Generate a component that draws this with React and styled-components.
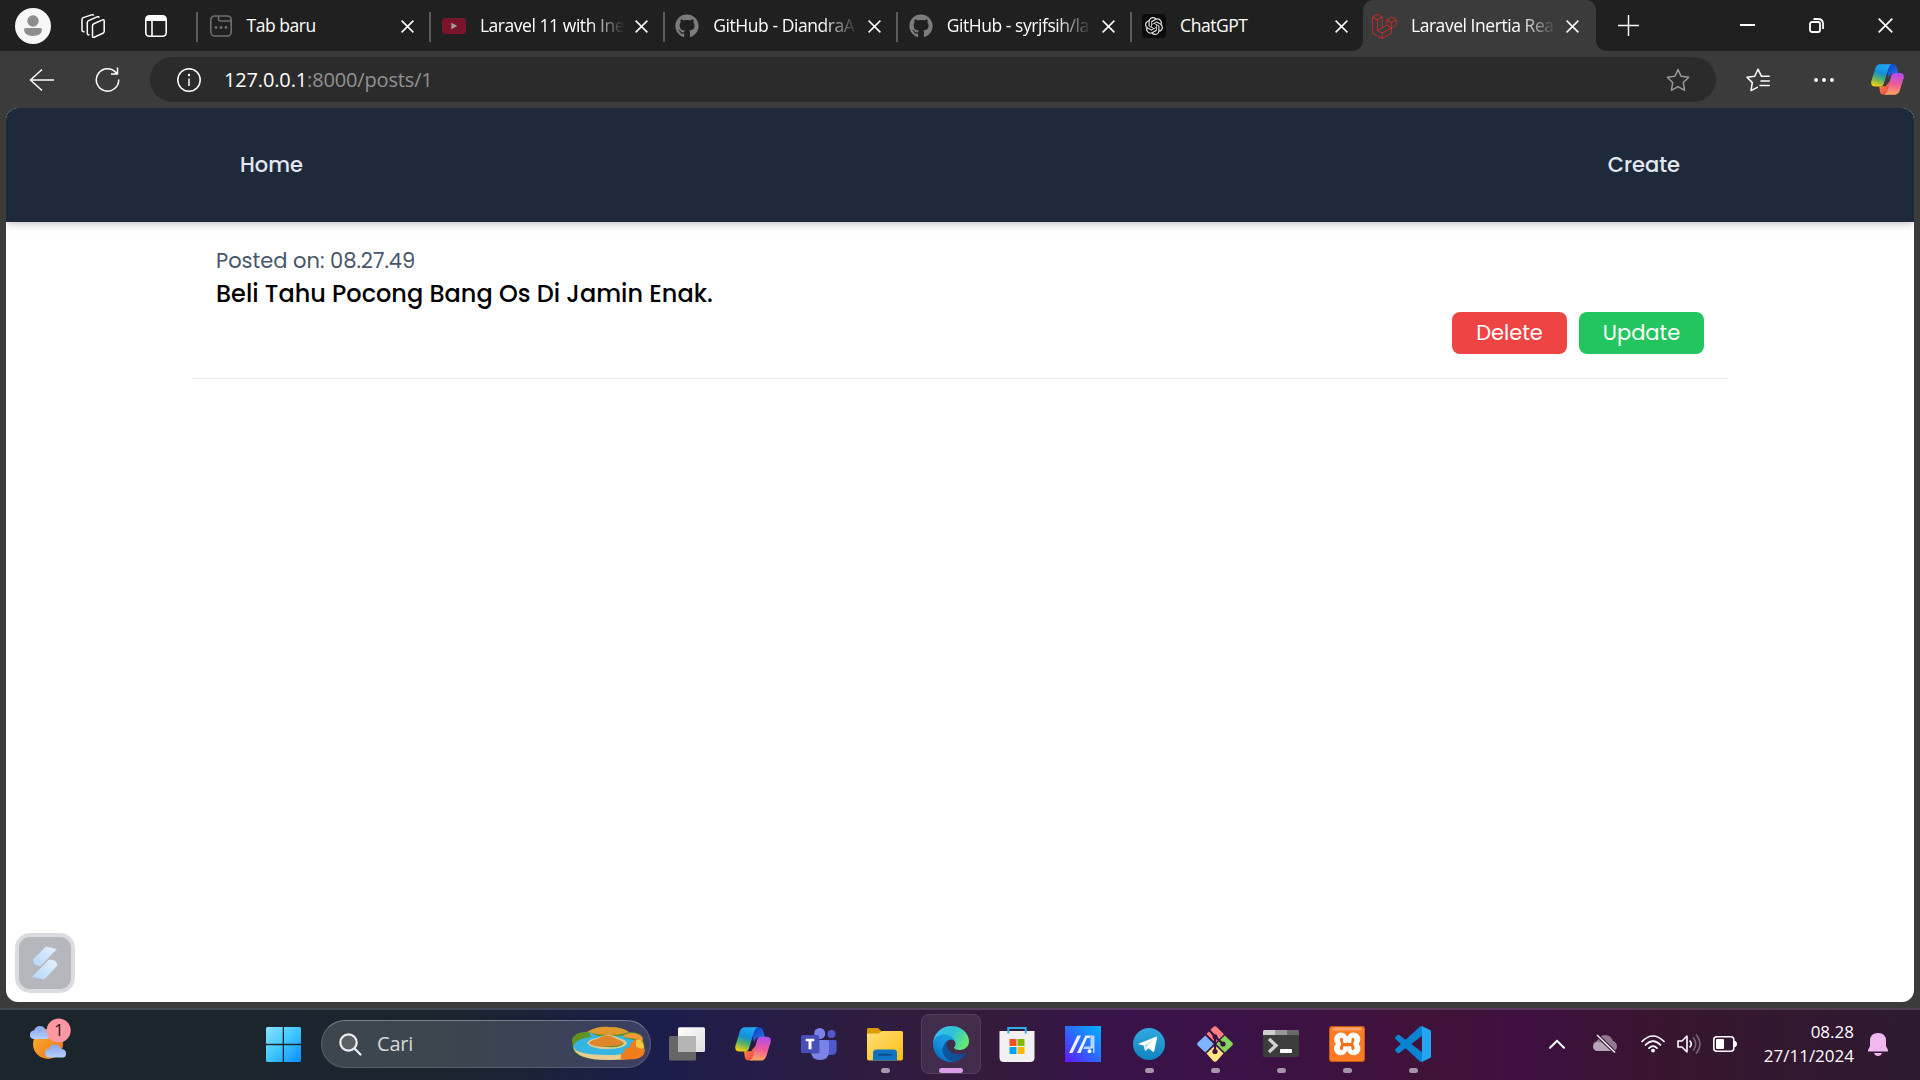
import React from "react";
import styled, { createGlobalStyle } from "styled-components";
import { FaGithub, FaLaravel } from "react-icons/fa";
import { SiOpenai } from "react-icons/si";

const Global = createGlobalStyle`
  *, *::before, *::after { box-sizing: border-box; }
  html, body { margin: 0; padding: 0; background: #3b3b3b; overflow: hidden; }
  svg { display: block; flex: none; }
`;

const ui = `"Segoe UI", "Open Sans", "Noto Sans", sans-serif`;
const web = `"Poppins", "Inter", sans-serif`;

const Screen = styled.div`
  width: 1920px;
  height: 1080px;
  display: flex;
  flex-direction: column;
  font-family: ${ui};
  color: #fff;
  background: #3b3b3b;
`;

/* ---------- title bar ---------- */
const TitleBar = styled.div`
  height: 51px;
  flex: none;
  display: flex;
  background: #202020;
`;
const TitleTools = styled.div`
  width: 196px;
  flex: none;
  display: flex;
  align-items: center;
  padding-left: 15px;
`;
const Avatar = styled.div`
  width: 36px;
  height: 36px;
  margin: 1px 30px 0 0;
`;
const ToolIcon = styled.div`
  margin-right: ${(p) => p.$gap || 0}px;
`;
const TabItem = styled.div`
  width: ${(p) => p.$w}px;
  height: 51px;
  flex: none;
  display: flex;
  align-items: center;
  position: relative;
  padding: 1px ${(p) => (p.$active ? 17 : 15)}px 0 ${(p) => (p.$active ? 10 : 12.5)}px;
  background: ${(p) => (p.$active ? "#3b3b3b" : "transparent")};
  border-radius: ${(p) => (p.$active ? "10px 10px 0 0" : "0")};
  &::before, &::after {
    content: "";
    display: ${(p) => (p.$active ? "block" : "none")};
    position: absolute;
    bottom: 0;
    width: 10px;
    height: 10px;
  }
  &::before { left: -10px; background: radial-gradient(circle at 0 0, transparent 9.5px, #3b3b3b 10px); }
  &::after { right: -10px; background: radial-gradient(circle at 100% 0, transparent 9.5px, #3b3b3b 10px); }
`;
const Divider = styled.div`
  width: 2px;
  height: 30px;
  margin: 12px -2px 0 0;
  background: #5c5c5c;
  flex: none;
`;
const TabIcon = styled.div`
  width: 24px;
  height: 24px;
  margin-right: 14px;
  display: flex;
  align-items: center;
  justify-content: center;
  flex: none;
`;
const TabTitle = styled.div`
  flex: 1;
  min-width: 0;
  white-space: nowrap;
  font-size: 17.5px;
  line-height: 26px;
  margin: 0 10px 2px 0;
  letter-spacing: -0.45px;
  mask-image: ${(p) => (p.$fade ? "linear-gradient(90deg,#000 calc(100% - 36px),transparent)" : "none")};
`;
const NewTab = styled.div`
  padding: 15px 0 0 22px;
  flex: 1;
`;
const WindowButtons = styled.div`
  width: 184px;
  display: flex;
  justify-content: space-between;
  padding: 18px 27px 0 4px;
  flex: none;
`;

/* ---------- toolbar ---------- */
const Toolbar = styled.div`
  height: 57px;
  flex: none;
  display: flex;
  align-items: center;
  padding: 0 15px 0 29px;
`;
const Address = styled.div`
  width: 1566px;
  height: 45px;
  margin: 0 30px 0 30px;
  padding: 0 26px 0 27px;
  display: flex;
  align-items: center;
  border-radius: 23px;
  background: #2b2b2b;
  flex: none;
`;
const Url = styled.div`
  flex: 1;
  margin-left: 23px;
  font-size: 20px;
  line-height: 28px;
  letter-spacing: -0.15px;
  color: #fff;
  span { color: #929292; }
`;

/* ---------- web page ---------- */
const Page = styled.div`
  flex: none;
  width: 1908px;
  height: 894px;
  margin: 0 6px;
  border-radius: 12px;
  overflow: hidden;
  background: #fff;
  font-family: ${web};
  display: flex;
  flex-direction: column;
`;
const Header = styled.header`
  height: 114px;
  flex: none;
  background: #1e293b;
  display: flex;
  justify-content: center;
  align-items: center;
  box-shadow: 0 5px 7.5px -1px rgba(0,0,0,.12), 0 2.5px 5px -2px rgba(0,0,0,.12);
`;
const Nav = styled.nav`
  width: 1536px;
  padding: 0 48px;
  display: flex;
  justify-content: space-between;
`;
const NavLink = styled.a`
  color: #e2e8f0;
  font-size: 21px;
  line-height: 30px;
  font-weight: 500;
`;
const Post = styled.article`
  width: 1536px;
  height: 157px;
  margin: 0 auto;
  padding: 23px 24px 0 24px;
  border-bottom: 1px solid #e5e7eb;
  display: flex;
  flex-direction: column;
`;
const Posted = styled.div`
  height: 30px;
  font-size: 21px;
  line-height: 32px;
  color: #475569;
  white-space: nowrap;
`;
const Title = styled.p`
  margin: 0;
  height: 37px;
  font-size: 24px;
  line-height: 38px;
  font-weight: 500;
  color: #000;
  white-space: nowrap;
`;
const Actions = styled.div`
  display: flex;
  justify-content: flex-end;
  gap: 12px;
`;
const Button = styled.button`
  width: ${(p) => p.$w}px;
  height: 42px;
  padding: 0;
  border: 0;
  border-radius: 8px;
  background: ${(p) => p.$bg};
  color: #fff;
  font: 400 21px/42px ${web};
`;
const DevBadge = styled.div`
  width: 60px;
  height: 60px;
  margin: auto 0 9px 9px;
  border: 4px solid #dbdce0;
  border-radius: 15px;
  background: #b6b7bd;
  display: flex;
  align-items: center;
  justify-content: center;
`;

/* ---------- taskbar ---------- */
const Taskbar = styled.div`
  height: 72px;
  margin-top: auto;
  flex: none;
  display: flex;
  align-items: flex-start;
  border-top: 2px solid rgba(255,255,255,.16);
  background: linear-gradient(90deg, #1b252b 0, #1a262e 440px, #18233a 540px, #1b1d4a 660px, #261c46 760px, #2f1c3e 880px, #351a3d 1000px, #38124a 1120px, #3b1245 1250px, #3f1239 1430px, #3e1040 1530px, #38152f 1660px, #2d1a30 1920px) border-box;
`;
const Weather = styled.div`
  width: 266px;
  padding: 8px 0 0 28px;
`;
const Start = styled.div`
  width: 55px;
  padding-top: 17px;
`;
const Search = styled.div`
  width: 330px;
  height: 48px;
  margin: 10px 6px 0 0;
  padding: 0 5px 0 17px;
  border: 1.5px solid rgba(255,255,255,.14);
  border-top-color: rgba(255,255,255,.3);
  border-radius: 24px;
  background: rgba(255,255,255,.15);
  display: flex;
  align-items: center;
`;
const SearchText = styled.div`
  flex: 1;
  margin-left: 15px;
  font-size: 20px;
  line-height: 28px;
  letter-spacing: -0.2px;
  color: #d6d9dc;
`;
const Apps = styled.div`
  display: flex;
  gap: 6px;
`;
const AppTile = styled.div`
  width: 60px;
  height: 60px;
  margin-top: 4px;
  border-radius: 8px;
  border: 1px solid ${(p) => (p.$active ? "rgba(255,255,255,.09)" : "transparent")};
  background: ${(p) => (p.$active ? "rgba(255,255,255,.08)" : "transparent")};
  display: flex;
  flex-direction: column;
  align-items: center;
  padding-top: 11px;
`;
const Running = styled.div`
  width: ${(p) => (p.$active ? 24 : 9)}px;
  height: 5px;
  margin-top: 6px;
  border-radius: 3px;
  background: ${(p) => (p.$active ? "#dc9ee8" : "#a596aa")};
`;
const Tray = styled.div`
  margin-left: auto;
  padding-right: 32px;
  height: 68px;
  display: flex;
  align-items: center;
`;
const TrayIcon = styled.div`
  margin-right: ${(p) => p.$gap}px;
`;
const Clock = styled.div`
  width: 96px;
  margin-right: 14px;
  text-align: right;
  font-size: 17px;
  line-height: 24px;
`;

/* ---------- icons ---------- */
const Close = ({ s = 13, w = 1.5 }) => (
  <svg width={s} height={s} viewBox="0 0 13 13" stroke="#fff" strokeWidth={w} fill="none">
    <path d="M.6.6 12.4 12.4M12.4.6.6 12.4" />
  </svg>
);
const NewTabIcon = () => (
  <svg width="24" height="24" viewBox="0 0 24 24" fill="none" stroke="#6f6f6f" strokeWidth="1.6">
    <rect x="1.8" y="2" width="20.4" height="20" rx="4" />
    <path d="M9.5 2v3.5q0 1.500 1.500 1.500h11" />
    <g fill="#6f6f6f" stroke="none"><circle cx="7" cy="13.5" r="1.4" /><circle cx="12" cy="13.5" r="1.4" /><circle cx="17" cy="13.5" r="1.4" /></g>
  </svg>
);
const YouTube = () => (
  <svg width="24" height="24" viewBox="0 0 24 24"><rect y="4" width="24" height="16" rx="3.5" fill="#7a1428" /><path d="M9.3 8.800v6.400l6-3.200z" fill="#a39a9c" /></svg>
);
const OpenAi = () => (
  <svg width="24" height="24" viewBox="0 0 24 24"><rect width="24" height="24" rx="4" fill="#0b0b0b" /><g transform="translate(3 3)"><SiOpenai size={18} color="#e2e2e2" /></g></svg>
);
const Star = ({ list, color }) => (
  <svg width="24" height="24" viewBox="0 0 24 24" fill="none" stroke={color} strokeWidth="1.5" strokeLinejoin="round" strokeLinecap="round">
    {list ? (
      <path d="M23.200 8.300H15.500L12 1.200 8.700 8.200 1 9.300l5.300 5.300L5 22.600l6.300-3.300M15 12.900h8.200M14 17.500h9.200" />
    ) : (
      <path d="m12 1.600 3.100 6.700 7.600 1-5.400 5.200 1.300 7.800-6.600-3.700-6.600 3.700 1.300-7.800-5.400-5.200 7.600-1z" />
    )}
  </svg>
);
const Copilot = ({ id, w = 36 }) => (
  <svg width={w} height={w} viewBox="0 0 36 36">
    <defs>
      <linearGradient id={id + "a"} x1=".6" y1="0" x2=".3" y2="1"><stop offset="0" stopColor="#1fa9f4" /><stop offset=".4" stopColor="#138fd8" /><stop offset=".65" stopColor="#4fae6d" /><stop offset="1" stopColor="#f2d010" /></linearGradient>
      <linearGradient id={id + "b"} x1=".5" y1="0" x2=".4" y2="1"><stop offset="0" stopColor="#b04df0" /><stop offset=".5" stopColor="#ec5a9b" /><stop offset="1" stopColor="#ffa65c" /></linearGradient>
      <linearGradient id={id + "c"} x1="0" y1="0" x2="1" y2="1"><stop offset="0" stopColor="#0a3dc0" /><stop offset="1" stopColor="#2a78e8" /></linearGradient>
      <linearGradient id={id + "d"} x1="0" y1="0" x2="1" y2="1"><stop offset="0" stopColor="#ff9a3c" /><stop offset="1" stopColor="#e8364a" /></linearGradient>
    </defs>
    <g transform="translate(0 1.3)">
      <path d="M16 0h7.500q3.500 0 4.500 3.500L30 10h-5q-4.500 0-6 5z" fill={`url(#${id}c)`} />
      <path d="M9 24h7l5-6-3.500 15h-5q-2 0-2.700-3z" fill={`url(#${id}d)`} />
      <path d="M10 0h12.500q-2.500 1-3.500 4.500L14 21q-1 3.200-4 3.200H4.500q-5.500 0-4-6L4.500 5Q6 0 10 0z" fill={`url(#${id}a)`} />
      <path d="M26 9.500h5.500q5.500 0 4 6L31.500 28.500Q30 33.300 26 33.300H14.500q2.500-1 3.500-4.500L22 13q1-3.500 4-3.500z" fill={`url(#${id}b)`} />
    </g>
  </svg>
);
const Edge = () => (
  <svg width="36" height="36" viewBox="0 0 256 256">
    <defs>
      <linearGradient id="ea" x1="0" y1=".5" x2="1" y2=".5"><stop offset="0" stopColor="#0c59a4" /><stop offset="1" stopColor="#114a8b" /></linearGradient>
      <linearGradient id="eb" x1=".8" y1=".2" x2=".2" y2="1"><stop offset="0" stopColor="#1b9de2" /><stop offset=".4" stopColor="#1595df" /><stop offset="1" stopColor="#0067bf" /></linearGradient>
      <linearGradient id="ec" x1="0" y1=".2" x2="1" y2=".6"><stop offset="0" stopColor="#35c1f1" /><stop offset=".5" stopColor="#2fc2d6" /><stop offset="1" stopColor="#66eb6e" /></linearGradient>
    </defs>
    <path fill="url(#ea)" d="M231 190.500c-3.400 1.800-6.900 3.400-10.500 4.700a101.500 101.500 0 0 1-35.900 6.500c-47.300 0-88.500-32.500-88.500-74.300 0-11.400 6.400-21.900 16.400-27.300-42.800 1.800-53.800 46.400-53.800 72.500 0 73.900 68.100 81.400 82.800 81.400 7.900 0 19.800-2.300 27-4.600l1.300-.4a128.300 128.300 0 0 0 66.600-52.800 4 4 0 0 0-5.400-5.700z" />
    <path fill="url(#eb)" d="M105.700 241.400a79.200 79.200 0 0 1-22.700-21.300 80.700 80.700 0 0 1 29.500-120c3.200-1.500 8.500-4.100 15.600-4a32.400 32.400 0 0 1 25.700 13 31.900 31.900 0 0 1 6.300 18.700c0-.2 24.500-79.600-80-79.600-43.900 0-80 41.600-80 78.200a130.200 130.200 0 0 0 12.100 56 128 128 0 0 0 156.400 67 75.500 75.500 0 0 1-62.800-8z" />
    <path fill="url(#ec)" d="M152.300 148.900c-.9 1-3.400 2.500-3.400 5.600 0 2.600 1.700 5.200 4.800 7.300 14.300 10 41.400 8.600 41.500 8.600 10.700 0 21.100-2.900 30.300-8.300a61.400 61.400 0 0 0 30.400-52.900c.3-22.400-8-37.300-11.300-43.900C223.500 23.900 177.700 0 128 0A128 128 0 0 0 0 126.200c.5-36.500 36.800-66 80-66 3.500 0 23.500.3 42 10.100 16.300 8.600 24.900 19 30.800 29.200 6.200 10.700 7.300 24.100 7.300 29.500s-2.700 13.300-7.800 19.900z" />
  </svg>
);
const TaskView = () => (
  <svg width="36" height="36" viewBox="0 0 36 36">
    <defs><linearGradient id="tv" x1="0" y1="0" x2="1" y2="1"><stop offset="0" stopColor="#fff" /><stop offset="1" stopColor="#dedede" /></linearGradient></defs>
    <rect x="0" y="10" width="27" height="24.500" rx="1.500" fill="#666" />
    <rect x="9" y="1.300" width="27" height="24.700" rx="1.500" fill="url(#tv)" />
    <path d="M9 10h18v16H10.500Q9 26 9 24.500z" fill="#b5b5b5" />
  </svg>
);
const Teams = () => (
  <svg width="36" height="36" viewBox="0 0 36 36">
    <circle cx="30.500" cy="8" r="4" fill="#5059c9" />
    <path d="M27 14h7q1.600 0 1.600 1.600V24q0 5-5 5H27z" fill="#5059c9" />
    <circle cx="18.700" cy="7.500" r="5.500" fill="#7b83eb" />
    <path d="M10 14h16q2 0 2 2v9q0 9-9 9t-9-9z" fill="#7b83eb" />
    <path d="M10 14h9v12q0 2-2 2h-6.600z" fill="#5a62c3" opacity=".7" />
    <rect x="0" y="9" width="18" height="18" rx="1.600" fill="#464eb8" />
    <path d="M4.800 12.700h8.400v2.600h-2.700v8H7.500v-8H4.800z" fill="#fff" />
  </svg>
);
const Explorer = () => (
  <svg width="36" height="36" viewBox="0 0 36 36">
    <defs><linearGradient id="fx" x1="0" y1="0" x2="1" y2="1"><stop offset="0" stopColor="#ffe07a" /><stop offset="1" stopColor="#fcbd12" /></linearGradient></defs>
    <path d="M1.500 2H11l4 3.500V12H0V3.500Q0 2 1.500 2z" fill="#dc9a05" />
    <path d="M0 7.500h11.500L15.500 5H34.500Q36 5 36 6.500v26q0 2-2 2H2q-2 0-2-2z" fill="url(#fx)" />
    <path d="M6 34.500V27q0-3.500 3.500-3.500h17Q30 23.500 30 27v7.500z" fill="#0f74c4" />
    <path d="M11 28.800h14" stroke="#0b4a85" strokeWidth="1.800" />
  </svg>
);
const Store = () => (
  <svg width="36" height="36" viewBox="0 0 36 36">
    <path d="M.5 5h35v26.500q0 4.500-4.500 4.500H5Q.5 36 .5 31.500z" fill="#f1f1f1" />
    <path d="M9.300 7.500V2h17.400v5.500" fill="none" stroke="#28b0ea" strokeWidth="2" />
    <path d="M10.500 13h7v7h-7z" fill="#f25022" /><path d="M18.500 13h7v7h-7z" fill="#7fba00" />
    <path d="M10.500 21h7v7h-7z" fill="#00a4ef" /><path d="M18.500 21h7v7h-7z" fill="#ffb900" />
  </svg>
);
const MyAsus = () => (
  <svg width="36" height="36" viewBox="0 0 36 36">
    <defs><linearGradient id="ma" x1="0" y1="1" x2="1" y2="0"><stop offset="0" stopColor="#6417ff" /><stop offset=".5" stopColor="#2b6bff" /><stop offset="1" stopColor="#00b3ff" /></linearGradient></defs>
    <path d="M0 0h36v36H0z" fill="url(#ma)" />
    <path d="M4 27 12.500 9.500H16L7.500 27zM12 27l8.500-17.500H26L24.500 12h-2.500L15.500 27z" fill="#eef3ff" />
    <path d="M25.500 9.500h4V27h-1.500v-4.500h-2.500zM19.500 20.500h6v2.500h-7.200z" fill="#b9d4ff" />
    <circle cx="24.500" cy="25.200" r="1.900" fill="#fff" />
  </svg>
);
const Telegram = () => (
  <svg width="36" height="36" viewBox="0 0 36 36">
    <defs><linearGradient id="tg" x1="0" y1="0" x2="0" y2="1"><stop offset="0" stopColor="#33a9e0" /><stop offset="1" stopColor="#0f83bf" /></linearGradient></defs>
    <circle cx="18" cy="18" r="16" fill="url(#tg)" />
    <path d="M7.500 17.800 25 10.700q1.300-.4 1 1.200L23.300 25q-.4 1.500-1.700.6l-4.300-3.300-2.400 2.300q-.8.700-1-.4l-1.300-4.700-5-1.300q-.9-.3-.1-.4z" fill="#fff" />
    <path d="m13.500 19.500 8.500-5.700-6.500 6.700-.8 3z" fill="#b9d9ec" />
  </svg>
);
const Git = () => (
  <svg width="36" height="36" viewBox="0 0 36 36">
    <path d="M9.500 8 16 1.300q2-2 4 0L27 8.300 18.500 16.800z" fill="#ff7f7f" />
    <path d="M8.300 9.500 16.800 18 8.300 26.500.8 19.500q-1.400-1.500 0-3z" fill="#80b3ff" />
    <path d="M27.700 9.500 35.200 16.500q1.400 1.500 0 3L27.700 26.500 19.200 18z" fill="#87d45e" />
    <path d="m18 19.200 8.500 8.300-6.500 7.200q-2 2-4 0l-6.500-7.200z" fill="#ffe680" />
    <path d="M12.500 4.500 18 10.500v15M18 10.500l8 7.500" stroke="#3a1245" strokeWidth="2.200" fill="none" />
    <circle cx="18" cy="10.800" r="2.500" fill="#3a1245" /><circle cx="18" cy="25.500" r="2.600" fill="#3a1245" /><circle cx="26" cy="18" r="2.600" fill="#3a1245" />
  </svg>
);
const Terminal = () => (
  <svg width="36" height="36" viewBox="0 0 36 36">
    <rect x="0" y="4" width="36" height="27" rx="1.500" fill="#3c3c3c" />
    <path d="M1.500 4H12v5H0V5.500Q0 4 1.500 4z" fill="#cfcfcf" /><path d="M12 4h12v5H12z" fill="#999" /><path d="M24 4h10.500Q36 4 36 5.500V9H24z" fill="#6a6a6a" />
    <path d="m6 13 7 6.500L6 26" fill="none" stroke="#d0d0d0" strokeWidth="3.400" />
    <rect x="17" y="23" width="12" height="4" rx=".8" fill="#fff" />
  </svg>
);
const Xampp = () => (
  <svg width="36" height="36" viewBox="0 0 36 36">
    <rect width="36" height="36" rx="3" fill="#c95c14" />
    <rect x="1" y="1" width="34" height="34" rx="2.500" fill="#fb7a24" />
    <path d="M5 1.500h26q3 0 1 3H4Q2 4.500 5 1.500z" fill="#fda469" />
    <g fill="#fff">
      <circle cx="12" cy="13.300" r="6.800" /><circle cx="24.500" cy="13.300" r="6.800" />
      <circle cx="11.800" cy="22.500" r="6.800" /><circle cx="24.700" cy="22.500" r="6.800" />
    </g>
    <path d="M11.500 12.300q1.800-1.200 2.500.7v2.800q.2 1.300 1.500 1.300h5.500q1.300 0 1.500-1.300V13q.7-1.900 2.300-.7 1.400 1.800 0 4-1.300 1.500 0 3.200 1.600 2.300 0 4.300-1.700 1-2.300-.8v-1.500q-.2-1.300-1.500-1.300h-5.500q-1.300 0-1.500 1.300V23q-.7 1.900-2.400.8-1.700-2 0-4.300 1.200-1.500 0-3.200-1.500-2.300-.1-4z" fill="#f0701c" />
    <path d="M18.200 3.500 16.500 8l1.700 2.200L20 8zM18.200 31.500 16.500 28l1.700-2.200L20 28z" fill="#fb7a24" />
  </svg>
);
const VsCode = () => (
  <svg width="36" height="36" viewBox="0 0 24 24">
    <path fill="#0a84d2" d="M23.150 2.587L18.210.210a1.494 1.494 0 0 0-1.705.290l-9.460 8.630-4.120-3.128a.999.999 0 0 0-1.276.057L.327 7.261A1 1 0 0 0 .326 8.740L3.899 12 .326 15.260a1 1 0 0 0 .001 1.479L1.650 17.940a.999.999 0 0 0 1.276.057l4.120-3.128 9.460 8.630a1.492 1.492 0 0 0 1.704.290l4.942-2.377A1.500 1.500 0 0 0 24 20.060V3.939a1.500 1.500 0 0 0-.850-1.352zm-5.146 14.861L10.826 12l7.178-5.448v10.896z" />
    <path fill="#27a5f3" d="M18 .15 23.150 2.587Q24 3 24 3.939V20.060q0 .9-.85 1.352L18 23.850z" />
  </svg>
);
const WeatherIcon = () => (
  <svg width="44" height="45" viewBox="0 -5 44 45">
    <defs>
      <linearGradient id="sun" x1="0" y1="0" x2="1" y2="1"><stop offset="0" stopColor="#fbb436" /><stop offset="1" stopColor="#ee6f12" /></linearGradient>
      <linearGradient id="cloud" x1="0" y1="0" x2="0" y2="1"><stop offset="0" stopColor="#86a6ee" /><stop offset="1" stopColor="#b5cffb" /></linearGradient>
    </defs>
    <circle cx="20" cy="21" r="15" fill="url(#sun)" />
    <path d="M6 16q-4 0-4-4 0-4.500 4-4.500 1.500-4.500 6-4.500t6 5q4 0 4 4t-4 4z" fill="url(#cloud)" />
    <path d="M21 34.500q-4 0-4-4.500t4-4q1.500-4.500 6-4.500t6 4.500q5 0 5 4.500t-4 4z" fill="url(#cloud)" />
    <circle cx="30.700" cy="7.500" r="12" fill="#ff97a3" />
    <text x="30.900" y="13.300" textAnchor="middle" fontSize="16.500" fill="#1c1014">1</text>
  </svg>
);
const IslandArt = () => (
  <svg width="74" height="36" viewBox="0 0 74 36">
    <path d="M1 13Q5 5 16 6 26 0 38 1q14 0 20 5 14 0 14 8l2 10q-2 10-36 10T2 22z" fill="#5f9420" />
    <path d="M16 6Q26 0 38 1q12 0 20 5-18 6-42 0z" fill="#e2982f" />
    <path d="M2 20q4-8 18-9l-2-5 9 4h24l8-3-6 5q17 2 19 9 0 9-34 9T2 20z" fill="#35b5e2" />
    <path d="M2 20q2 9 34 9 30 0 36-8 0 13-34 13T2 20z" fill="#e9cd92" />
    <path d="M16 17q2-4 10-5 12-6 22 0 8 2 8 6-4 5-20 5t-20-6z" fill="#d9cf9a" />
    <path d="M18 17q2-3 8-4 10-7 20 0 6 2 7 4-4 4-18 4t-17-4z" fill="#e0862a" />
    <path d="M30 20q16 1 23-3-2 5-18 4z" fill="#6d8c1a" />
    <path d="M52 11q2-4 10-4 10 1 10 8-8-3-20-4z" fill="#f09a3a" />
    <path d="M50 34q-1-7 3-8 1-6 6-4 0-6 4-7 2-5 5-2 5 3 5 9 3 8-8 11z" fill="#ee7d1e" />
    <path d="M65 20q-1-7 3-7 5 3 5 9-5 2-8-2z" fill="#f0c83a" />
  </svg>
);

const apps = [
  { icon: <TaskView /> },
  { icon: <Copilot id="cpb" /> },
  { icon: <Teams /> },
  { icon: <Explorer />, run: true },
  { icon: <Edge />, run: true, active: true },
  { icon: <Store /> },
  { icon: <MyAsus /> },
  { icon: <Telegram />, run: true },
  { icon: <Git />, run: true },
  { icon: <Terminal />, run: true },
  { icon: <Xampp />, run: true },
  { icon: <VsCode />, run: true },
];

const tabs = [
  { icon: <NewTabIcon />, title: "Tab baru" },
  { icon: <YouTube />, title: "Laravel 11 with Ine", fade: true },
  { icon: <FaGithub size={24} color="#7c7c7c" />, title: "GitHub - DiandraA", fade: true },
  { icon: <FaGithub size={24} color="#7c7c7c" />, title: "GitHub - syrjfsih/la", fade: true },
  { icon: <OpenAi />, title: "ChatGPT" },
  { icon: <FaLaravel size={25} color="#d92f28" />, title: "Laravel Inertia Rea", fade: true, active: true },
];

export default function App() {
  return (
    <Screen>
      <Global />
      <TitleBar>
        <TitleTools>
          <Avatar>
            <svg width="36" height="36" viewBox="0 0 36 36"><circle cx="18" cy="18" r="18" fill="#f7f7f7" /><circle cx="18" cy="13" r="5.700" fill="#8e8e8e" /><path d="M9 21.500q0-1.500 2-1.500h14q2 0 2 1.500 0 6.500-9 6.500t-9-6.500z" fill="#8e8e8e" /></svg>
          </Avatar>
          <ToolIcon $gap={40}>
            <svg width="24" height="24" viewBox="0 0 24 24" fill="none" stroke="#fff" strokeWidth="1.500" strokeLinejoin="round">
              <path d="M11.500 11.500q0-1.500 1.300-2L21.500 5.600q1.700-.6 1.700 1.200V17q0 1.300-1.300 2l-8.700 4q-1.700.6-1.700-1.200z" transform="translate(0 .3)" />
              <path d="M8.500 20.500q-2.200.8-2.200-1.200V8.500q0-1.300 1.300-1.900L16 2.900q1.800-.6 2.200.8" />
              <path d="M3.500 17.500q-2.500.7-2.500-1.500V5.500q0-1.300 1.200-1.900L10.500.9q1.800-.6 2.300.6" />
            </svg>
          </ToolIcon>
          <ToolIcon>
            <svg width="22" height="22" viewBox="0 0 22 22"><rect x=".8" y=".8" width="20.400" height="20.400" rx="3.500" fill="none" stroke="#fff" strokeWidth="1.600" /><path d="M1 6V4q0-3 3-3h14q3 0 3 3v2z" fill="#fff" /><path d="M7 6v15" stroke="#fff" strokeWidth="1.600" /></svg>
          </ToolIcon>
        </TitleTools>
        {tabs.map((t) => (
          <React.Fragment key={t.title}>
            {!t.active && <Divider />}
            <TabItem $active={t.active} $w={t.active ? 233 : 233.4}>
              <TabIcon>{t.icon}</TabIcon>
              <TabTitle $fade={t.fade}>{t.title}</TabTitle>
              <Close />
            </TabItem>
          </React.Fragment>
        ))}
        <NewTab>
          <svg width="21" height="21" viewBox="0 0 21 21" stroke="#fff" strokeWidth="1.400"><path d="M10.500 0v21M0 10.500h21" /></svg>
        </NewTab>
        <WindowButtons>
          <svg width="15" height="15" viewBox="0 0 15 15"><path d="M0 7h15" stroke="#fff" strokeWidth="2" /></svg>
          <svg width="15" height="15" viewBox="0 0 15 15" fill="none" stroke="#fff" strokeWidth="1.800"><rect x="1" y="4" width="10" height="10" rx="2" /><path d="M4.500 1H9q5 0 5 5v5" /></svg>
          <Close s={15} w={1.500} />
        </WindowButtons>
      </TitleBar>

      <Toolbar>
        <ToolIcon $gap={41}>
          <svg width="25" height="24" viewBox="0 0 25 24" fill="none" stroke="#fff" strokeWidth="1.500"><path d="M25 12H1.500M13 1.500 1.500 12 13 22.500" /></svg>
        </ToolIcon>
        <ToolIcon>
          <svg width="25" height="25" viewBox="0 0 25 25" fill="none" stroke="#fff" strokeWidth="1.500"><path d="M23.700 12.500A11.200 11.200 0 1 1 21.500 6.200M22.500.5v6.500H16" /></svg>
        </ToolIcon>
        <Address>
          <svg width="24" height="24" viewBox="0 0 24 24" fill="none" stroke="#fff" strokeWidth="1.500"><circle cx="12" cy="12" r="11.200" /><path d="M12 10.500V18" /><circle cx="12" cy="7" r="1.200" fill="#fff" stroke="none" /></svg>
          <Url>127.0.0.1<span>:8000/posts/1</span></Url>
          <Star color="#9a9a9a" />
        </Address>
        <ToolIcon $gap={44}><Star list color="#fff" /></ToolIcon>
        <ToolIcon $gap={37}>
          <svg width="20" height="6" viewBox="0 0 20 6" fill="#fff"><circle cx="2" cy="3" r="1.900" /><circle cx="10" cy="3" r="1.900" /><circle cx="18" cy="3" r="1.900" /></svg>
        </ToolIcon>
        <Copilot id="cpa" w={33} />
      </Toolbar>

      <Page>
        <Header>
          <Nav>
            <NavLink>Home</NavLink>
            <NavLink>Create</NavLink>
          </Nav>
        </Header>
        <Post>
          <Posted>Posted on: 08.27.49</Posted>
          <Title>Beli Tahu Pocong Bang Os Di Jamin Enak.</Title>
          <Actions>
            <Button $w={115} $bg="#ef4444">Delete</Button>
            <Button $w={125} $bg="#22c55e">Update</Button>
          </Actions>
        </Post>
        <DevBadge>
          <svg width="26" height="34" viewBox="0 0 26 34">
            <defs><linearGradient id="db" x1="0" y1="1" x2="1" y2="0"><stop offset="0" stopColor="#b4d6fa" /><stop offset="1" stopColor="#e6f1fc" /></linearGradient></defs>
            <path d="M14 .5 25 3 8.500 20Q1 20.500 1 13.500z" fill="url(#db)" />
            <path d="M12 33.500 0 31 17 13.500q8 0 8.500 6z" fill="url(#db)" />
          </svg>
        </DevBadge>
      </Page>

      <Taskbar>
        <Weather><WeatherIcon /></Weather>
        <Start>
          <svg width="35" height="35" viewBox="0 0 35 35">
            <defs><linearGradient id="win" x1="0" y1="0" x2="1" y2="1"><stop offset="0" stopColor="#8be2ff" /><stop offset=".5" stopColor="#3fc6ff" /><stop offset="1" stopColor="#0a8cff" /></linearGradient></defs>
            <path d="M1 0h15.700v16.700H0V1zM18 0h16l1 1v15.700H18zM0 18.300h16.700V35H1l-1-1zM18 18.300h17V34l-1 1H18z" fill="url(#win)" />
          </svg>
        </Start>
        <Search>
          <svg width="23" height="23" viewBox="0 0 23 23" fill="none" stroke="#eceef0" strokeWidth="2.200" strokeLinecap="round"><circle cx="9.500" cy="9.500" r="8.200" fill="rgba(255,255,255,.15)" /><path d="m15.500 15.500 6 6" /></svg>
          <SearchText>Cari</SearchText>
          <IslandArt />
        </Search>
        <Apps>
          {apps.map((a, i) => (
            <AppTile key={i} $active={a.active}>
              {a.icon}
              {a.run && <Running $active={a.active} />}
            </AppTile>
          ))}
        </Apps>
        <Tray>
          <TrayIcon $gap={28}>
            <svg width="16" height="10" viewBox="0 0 16 10" fill="none" stroke="#fff" strokeWidth="2" strokeLinecap="round"><path d="m1 8.800 7-7 7 7" /></svg>
          </TrayIcon>
          <TrayIcon $gap={24}>
            <svg width="24" height="20" viewBox="0 0 24 20"><path d="M5 17q-5 0-5-5 0-4 4-5 2-6 8-6 6 0 8 6 4 1 4 5.500T19 17z" fill="#8f7a92" /><path d="M0 13q1-5 5-5 4 0 8 3l9 5q-1 1-3 1H5q-4 0-5-4z" fill="#b6a5b8" /><path d="M4 1 22 18.500" stroke="#38152f" strokeWidth="3.500" /><path d="M4 1 22 18.500" stroke="#fff" strokeWidth="1.400" /></svg>
          </TrayIcon>
          <TrayIcon $gap={12}>
            <svg width="24" height="18" viewBox="0 0 24 18" fill="none" stroke="#fff" strokeWidth="1.700" strokeLinecap="round"><path d="M1 6.500q11-11 22 0M4.500 10q7.500-7.500 15 0M8 13.200q4-4 8 0" /><circle cx="12" cy="15.600" r="1.900" fill="#fff" stroke="none" /></svg>
          </TrayIcon>
          <TrayIcon $gap={12}>
            <svg width="24" height="20" viewBox="0 0 24 20" fill="none" stroke="#fff" strokeWidth="1.600" strokeLinejoin="round" strokeLinecap="round"><path d="M1 7h4l5-5v16l-5-5H1z" /><path d="M13 7q2.500 3 0 6" /><path d="M16.500 4q4.500 6 0 12M19.500 1q7 9 0 18" stroke="#7c6579" /></svg>
          </TrayIcon>
          <TrayIcon $gap={21}>
            <svg width="24" height="16" viewBox="0 0 24 16"><rect x=".8" y=".8" width="20" height="14.400" rx="3" fill="none" stroke="#fff" strokeWidth="1.600" /><rect x="3" y="3" width="8" height="10" rx="1" fill="#fff" /><path d="M21 5h1.500Q24 6 24 8t-1.500 3H21z" fill="#fff" /></svg>
          </TrayIcon>
          <Clock><div>08.28</div><div>27/11/2024</div></Clock>
          <svg width="20" height="23" viewBox="0 0 20 23" fill="#f0b8ef"><path d="M10 0q8 0 8 8v5l2 4v1.500H0V17l2-4V8q0-8 8-8z" /><path d="M6 20h8q-1 3-4 3t-4-3z" /></svg>
        </Tray>
      </Taskbar>
    </Screen>
  );
}
